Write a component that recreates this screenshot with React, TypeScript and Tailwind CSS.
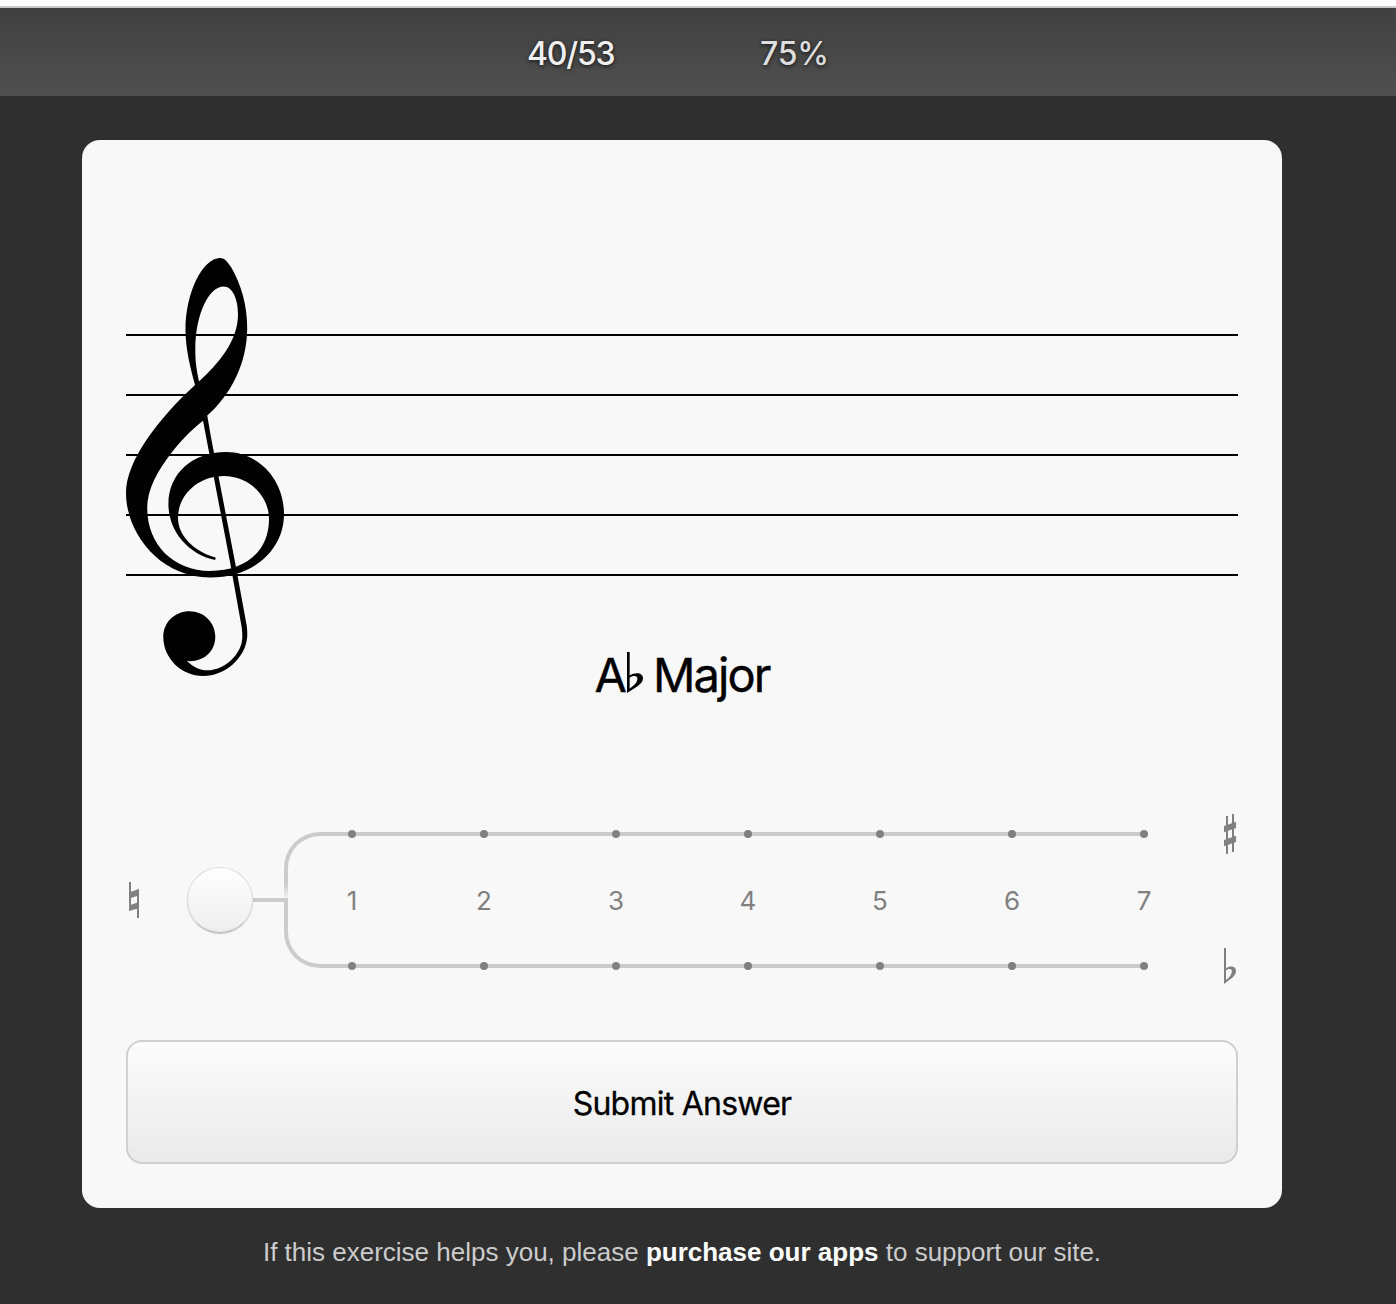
import React from "react";

const STEPS = [1, 2, 3, 4, 5, 6, 7];
const STAFF_LINES = [335, 395, 455, 515, 575];

function Staff() {
  return (
    <svg className="block h-[420px] w-[1112px]" viewBox="126 258 1112 420" role="img" aria-label="Treble staff">
      {STAFF_LINES.map((y) => (
        <rect key={y} x="126" y={y - 1} width="1112" height="2" fill="#000" />
      ))}
      {/* loop, sweep and inner spiral */}
      <path
        fillRule="evenodd"
        d="M195 385 C190 367 185.500 348 185.500 330 C185.500 292 203 258 220 258 C225 258 227.500 262 231 267 C241 284 247.200 305 247.200 328 C247.200 363 231 395 206.700 416 L202.700 421 C190 431 180 442 171.700 452.500 C158 470 147.200 489 147.200 508 C147.200 545 174 571 210 571 C246 571 269 551 269 519 C269 495 248 476 224 476 C198 476 178 495 178 518 C178 535 193 551 215.600 557.500 L215.300 560 C187 554 168.400 530 168.400 504 C168.400 474 192 452 226 452 C259 452 284 480 284 514 C284 551 252 577.500 210 577.500 C160 577.500 126 533 126 493 C126 461 158 419 195 385 Z
           M199 381.500 C197 372 195.300 363 195.300 350 C195.300 312 210 286.500 223.500 286.500 C233 286.500 238 300 238 314 C238 341 219 363 199 381.500 Z"
      />
      {/* stem and tail */}
      <path d="M202.500 418 L207 414 C209 427 211.500 440 214 453 L235.200 563 L246.600 625 C247.200 629 247.400 632 247.200 637 C245.500 658 225 676 203.300 676 C181 676 163.300 658 163.300 637 C163.300 622 175 611.200 189.500 611.200 C204 611.200 215.300 622.500 215.300 636.500 C215.300 652 203 662.500 187 661 C193 667 200 670.300 207.500 670.300 C225 670.300 243 653 242.300 636 C242.300 631 241.900 629 241.600 626.700 L230.200 563 L209.200 453 Z" />
    </svg>
  );
}

function Flat({ className }: { className: string }) {
  return (
    <svg className={className} viewBox="0 0 12 36" preserveAspectRatio="none" fill="currentColor" aria-label="flat">
      <path
        fillRule="evenodd"
        d="M0 0 H2 V20.600 C3.500 19.200 5.800 18.600 7.500 18.600 C10.300 18.600 12 20.400 12 23 C12 28.500 5.500 31.500 0 36 Z M2 22.600 V32 C5 29.500 7.800 26.600 7.800 23.400 C7.800 21.800 7 21 5.700 21 C4.100 21 2.900 21.600 2 22.600 Z"
      />
    </svg>
  );
}

function Sharp() {
  return (
    <svg className="block h-10 w-3" viewBox="0 0 12 40" fill="currentColor" aria-label="sharp">
      <path d="M2 2h2v38H2zM8 0h2v38H8zM0 12L12 7.800v6.200L0 18.200zM0 26L12 21.800v6.200L0 32.200z" />
    </svg>
  );
}

function Natural() {
  return (
    <svg className="block h-9 w-[10px]" viewBox="0 0 10 36" fill="currentColor" aria-label="natural">
      <path d="M0 0h2v28.500H0zM8 7.200h2V36H8zM0 10.500L10 7v6.300L0 16.800zM0 23.500L10 20v6.200L0 29z" />
    </svg>
  );
}

function Dots({ className }: { className: string }) {
  return (
    <div className={className}>
      {STEPS.map((n) => (
        <span key={n} className="size-2 rounded-full bg-[#808080]" />
      ))}
    </div>
  );
}

function KeySlider() {
  return (
    <div className="mt-[110px] flex h-[176px] items-center text-[#808080]">
      <div className="w-[61px] shrink-0 pl-[3px]">
        <Natural />
      </div>
      <div className="size-[66px] shrink-0 rounded-full border border-[#dcdcdc] border-b-[#bcbcbc] bg-gradient-to-b from-white to-[#eeeeee] shadow-[0_1px_1px_rgba(0,0,0,0.22)]" />
      <div className="h-1 w-[31px] shrink-0 bg-[#cccccc]" />
      <div className="relative flex h-[136px] w-[860px] shrink-0 items-center rounded-l-[36px] border-4 border-r-0 border-[#cccccc]">
        <div className="absolute -left-1 top-[48px] h-[14px] w-1 bg-gradient-to-b from-transparent to-[#f1f1f1]" />
        <Dots className="absolute -top-[6px] left-[60px] flex w-[800px] justify-between" />
        <div className="-ml-[2px] grid w-[924px] shrink-0 grid-cols-[repeat(7,132px)] pt-[2px] text-center font-['Inter'] text-[26px] leading-8">
          {STEPS.map((n) => (
            <span key={n}>{n}</span>
          ))}
        </div>
        <Dots className="absolute -bottom-[6px] left-[60px] flex w-[800px] justify-between" />
      </div>
      <div className="ml-20 flex h-[176px] w-3 shrink-0 flex-col justify-between pb-1 pt-[2px]">
        <Sharp />
        <Flat className="block h-9 w-3" />
      </div>
    </div>
  );
}

export default function App() {
  return (
    <div className="h-[1304px] w-[1396px] overflow-hidden bg-[#2f2f2f]">
      <div className="h-2 border-b-2 border-[#c8c8c8] bg-white" />
      <header className="flex h-[88px] items-center bg-gradient-to-b from-[#404040] to-[#505050] pt-[3px] font-['Inter'] text-[32px] text-[#f0f0f0] [text-shadow:0_1px_4px_rgba(0,0,0,0.8)]">
        <span className="ml-[527px] w-[233px] font-medium tracking-[-1.2px]">40/53</span>
        <span className="font-[450] tracking-[-0.2px] text-[#dddddd]">75%</span>
      </header>
      <main className="ml-[82px] mt-[44px] h-[1068px] w-[1200px] rounded-[18px] bg-[#f8f8f8] px-[44px] pt-[118px]">
        <Staff />
        <h1 className="-mt-[30px] flex h-[54px] items-center justify-center font-['Inter'] text-[47px] leading-[54px] text-black [-webkit-text-stroke:0.4px_black]">
          <span className="tracking-[-1px]">A</span>
          <Flat className="mb-[5px] ml-[1px] h-[41px] w-[16px]" />
          <span className="ml-[10px] tracking-[-1.900px]">Major</span>
        </h1>
        <KeySlider />
        <button className="mt-[52px] block h-[124px] w-full rounded-2xl border-2 border-[#cfcfcf] bg-gradient-to-b from-[#fcfcfc] to-[#eaeaea] pt-[3px] font-['Inter'] text-[32px] tracking-[-0.75px] text-black [-webkit-text-stroke:0.3px_black]">
          Submit Answer
        </button>
      </main>
      <footer className="mt-7 w-[1364px] whitespace-nowrap text-center font-['Liberation_Sans'] text-[26px] leading-8 text-[#cccccc]">
        If this exercise helps you, please <a className="font-bold text-white">purchase our apps</a> to support our site.
      </footer>
    </div>
  );
}
